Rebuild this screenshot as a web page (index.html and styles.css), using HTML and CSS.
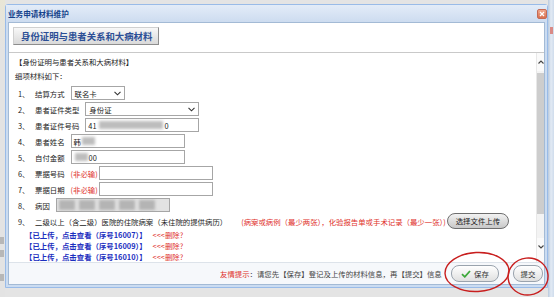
FILE: index.html
```html
<!DOCTYPE html>
<html lang="zh-CN">
<head>
  <meta charset="UTF-8">
  <title>业务申请材料维护</title>
  <link rel="stylesheet" href="styles.css">
</head>
<body>
  <div class="desk">
    <div class="desk-left">
      <span class="ghost"></span>
      <span class="ghost"></span>
      <span class="ghost ghost-low"></span>
    </div>
    <div class="win-col">
      <div class="win">
        <div class="win-title">
          <span>业务申请材料维护</span>
          <span class="win-close">
            <svg width="6" height="6" viewBox="0 0 6 6"><path d="M1 1L5 5M5 1L1 5" stroke="#fff" stroke-width="1.3"/></svg>
          </span>
        </div>
        <div class="win-body">
          <div class="tab-bar">
            <div class="tab-btn">身份证明与患者关系和大病材料</div>
          </div>
          <div class="main">
            <div class="form">
              <div class="sec-title">【身份证明与患者关系和大病材料】</div>
              <div class="sec-sub">细项材料如下：</div>

              <div class="row">
                <span class="num">1、</span><span class="lbl">结算方式</span>
                <div class="field sel w54">联名卡<svg class="chev" width="7" height="5" viewBox="0 0 7 5"><path d="M0.5 0.8L3.5 3.8L6.5 0.8" fill="none" stroke="#333" stroke-width="1.1"/></svg></div>
              </div>
              <div class="row">
                <span class="num">2、</span><span class="lbl">患者证件类型</span>
                <div class="field sel w114">身份证<svg class="chev" width="7" height="5" viewBox="0 0 7 5"><path d="M0.5 0.8L3.5 3.8L6.5 0.8" fill="none" stroke="#333" stroke-width="1.1"/></svg></div>
              </div>
              <div class="row">
                <span class="num">3、</span><span class="lbl">患者证件号码</span>
                <div class="field w114">41<span class="blur b-long"></span>0</div>
              </div>
              <div class="row">
                <span class="num">4、</span><span class="lbl">患者姓名</span>
                <div class="field w114">韩<span class="blur b-short"></span></div>
              </div>
              <div class="row">
                <span class="num">5、</span><span class="lbl">自付金额</span>
                <div class="field w114"><span class="blur b-short"></span>00</div>
              </div>
              <div class="row">
                <span class="num">6、</span><span class="lbl">票据号码</span><span class="note">(非必输)</span>
                <div class="field w114"></div>
              </div>
              <div class="row">
                <span class="num">7、</span><span class="lbl">票据日期</span><span class="note">(非必输)</span>
                <div class="field w114"></div>
              </div>
              <div class="row">
                <span class="num">8、</span><span class="lbl">病因</span>
                <div class="field field-blur w114"><span class="blur b-word"></span><span class="blur b-word"></span><span class="blur b-word"></span><span class="blur b-word"></span><span class="blur b-word"></span></div>
              </div>
              <div class="row">
                <span class="num">9、</span><span class="lbl">二级以上（含二级）医院的住院病案（未住院的提供病历）</span>
                <span class="note note-gap">(病案或病例（最少两张），化验报告单或手术记录（最少一张）)</span>
                <span class="upload-btn">选择文件上传</span>
              </div>

              <div class="link-row"><span class="link">【已上传，点击查看（序号16007）】</span><span class="del">&lt;&lt;&lt;删除?</span></div>
              <div class="link-row"><span class="link">【已上传，点击查看（序号16009）】</span><span class="del">&lt;&lt;&lt;删除?</span></div>
              <div class="link-row"><span class="link">【已上传，点击查看（序号16010）】</span><span class="del">&lt;&lt;&lt;删除?</span></div>
            </div>
            <div class="vscroll">
              <div class="vs-btn">
                <svg width="6" height="4" viewBox="0 0 6 4"><path d="M0.5 3.5L3 1L5.5 3.5" fill="none" stroke="#444" stroke-width="1.1"/></svg>
              </div>
              <div class="vs-thumb"></div>
              <div class="vs-track"></div>
              <div class="vs-btn">
                <svg width="6" height="4" viewBox="0 0 6 4"><path d="M0.5 0.5L3 3L5.5 0.5" fill="none" stroke="#444" stroke-width="1.1"/></svg>
              </div>
              <div class="vs-end"></div>
            </div>
          </div>
          <div class="footer">
            <span class="tip"><span class="tip-key">友情提示</span>：请您先【保存】登记及上传的材料信息，再【提交】信息</span>
            <span class="btn btn-save">
              <svg width="10" height="8" viewBox="0 0 10 8"><path d="M1 4.2L3.8 6.8L9 1" fill="none" stroke="#3da83a" stroke-width="1.8"/></svg>
              保存
            </span>
            <span class="btn btn-submit">提交</span>
          </div>
        </div>
      </div>
    </div>
    <div class="desk-right"><span class="desk-mark"></span></div>
  </div>

  <svg class="marks" width="554" height="297" viewBox="0 0 554 297">
    <ellipse cx="477" cy="272" rx="32" ry="19.5" fill="none" stroke="#c81e1e" stroke-width="1.4" transform="rotate(-3 477 272)"/>
    <ellipse cx="528" cy="276.5" rx="20" ry="18.5" fill="none" stroke="#c81e1e" stroke-width="1.4" transform="rotate(-6 528 276)"/>
  </svg>
</body>
</html>
```

FILE: styles.css
```css
* {
  margin: 0;
  padding: 0;
  box-sizing: border-box;
}

body {
  width: 554px;
  height: 297px;
  overflow: hidden;
  position: relative;
  background: #e4e4e4;
  font-family: "Noto Sans CJK SC", "Noto Sans", sans-serif;
  font-size: 7.4px;
  color: #222;
}

.desk {
  display: flex;
  height: 297px;
}

.desk-left {
  width: 5px;
  flex: none;
  display: flex;
  flex-direction: column;
  padding-top: 237px;
  gap: 6px;
  background: linear-gradient(#e9e6d6 0, #e3e3e3 50px);
}

.ghost {
  width: 4px;
  height: 7px;
  background: #9a9a9a;
  opacity: 0.6;
}

.ghost-low {
  margin-top: 11px;
}

.desk-right {
  flex: 1;
  position: relative;
  background: linear-gradient(to right, #b9c9dd, #e2eaf4 3px, #cfdcec);
}

.desk-mark {
  position: absolute;
  left: 2px;
  top: 27px;
  width: 3px;
  height: 7px;
  background: #d98a86;
}

.win-col {
  width: 543px;
  flex: none;
  padding-top: 4px;
}

.win {
  height: 284px;
  display: flex;
  flex-direction: column;
  background: #cbdcf1;
  border: 1px solid #99bbe8;
  border-radius: 3px 3px 0 0;
}

.win-title {
  height: 17px;
  flex: none;
  display: flex;
  align-items: center;
  justify-content: space-between;
  padding: 0 0 0 2px;
  background: linear-gradient(#e3ecf8, #cddcf0);
  color: #15428b;
  font-weight: bold;
  font-size: 7.6px;
}

.win-close {
  width: 10px;
  height: 10px;
  display: flex;
  align-items: center;
  justify-content: center;
  border: 1px solid #c46a55;
  border-radius: 2px;
  background: linear-gradient(#f0a78c, #d9704f);
}

.win-body {
  flex: 1;
  min-height: 0;
  margin: 0 2px 2px;
  display: flex;
  flex-direction: column;
  background: #fff;
  border: 1px solid #a3bad5;
}

.tab-bar {
  height: 30px;
  flex: none;
  padding: 4px 0 0 4px;
  border-bottom: 1px solid #c9c9c9;
}

.tab-btn {
  display: inline-block;
  height: 18px;
  line-height: 16px;
  padding: 0 6px 0 7px;
  font-size: 9.4px;
  font-weight: bold;
  color: #2c4f96;
  background: linear-gradient(#f8f8f8, #d9d9d9);
  border: 1px solid;
  border-color: #d0d0d0 #8d8d8d #8d8d8d #d0d0d0;
}

.main {
  flex: 1;
  min-height: 0;
  display: flex;
  overflow: hidden;
}

.form {
  flex: 1;
  padding: 2px 0 0 6px;
  overflow: hidden;
  white-space: nowrap;
}

.sec-title,
.sec-sub {
  line-height: 14px;
}

.sec-sub {
  margin-bottom: 2px;
}

.row {
  height: 16px;
  display: flex;
  align-items: center;
  padding-left: 3px;
}

.num {
  width: 17px;
  flex: none;
}

.lbl {
  margin-right: 6px;
}

.note {
  color: #e0302a;
  margin-right: 1px;
}

.note-gap {
  margin-left: 8px;
}

.field {
  height: 14px;
  flex: none;
  display: flex;
  align-items: center;
  padding: 0 2px;
  border: 1px solid #a6a6a6;
  background: #fff;
  overflow: hidden;
}

.sel {
  justify-content: space-between;
  padding: 0 3px;
}

.w54 {
  width: 54px;
}

.w114 {
  width: 114px;
}

.blur {
  display: inline-block;
  height: 8px;
  background: #bdbdbd;
  filter: blur(1.4px);
}

.b-long {
  width: 64px;
  margin: 0 2px;
}

.b-short {
  width: 13px;
  margin: 0 1px;
}

.field-blur {
  background: #e2e2e2;
  gap: 4px;
}

.b-word {
  width: 16px;
  height: 10px;
  background: #b4b4b4;
}

.upload-btn {
  height: 16px;
  line-height: 14px;
  padding: 0 8px;
  border: 1px solid #6e6e6e;
  border-radius: 8px;
  background: linear-gradient(#f2f2f2, #c8c8c8);
  color: #222;
}

.link-row {
  height: 11px;
  line-height: 11px;
  padding-left: 10px;
  display: flex;
}

.link {
  color: #1c2fbf;
  font-weight: bold;
}

.del {
  color: #e0302a;
  margin-left: 6px;
}

.vscroll {
  width: 8px;
  flex: none;
  display: flex;
  flex-direction: column;
  background: #f3f3f3;
  border-left: 1px solid #e8e8e8;
}

.vs-btn {
  height: 18px;
  flex: none;
  display: flex;
  align-items: center;
  justify-content: center;
  background: #fafafa;
}

.vs-thumb {
  height: 141px;
  flex: none;
  margin-top: 2px;
  background: #cdcdcd;
}

.vs-track {
  flex: 1;
}

.vs-end {
  height: 6px;
  flex: none;
  background: #fafafa;
}

.footer {
  height: 22px;
  flex: none;
  display: flex;
  align-items: center;
  justify-content: flex-end;
  padding-right: 1px;
  background: #f6f8fb;
  border-top: 1px solid #dde3ea;
  white-space: nowrap;
}

.tip {
  width: 230px;
  overflow: hidden;
  color: #444;
}

.tip-key {
  color: #e0302a;
}

.btn {
  height: 17px;
  display: flex;
  align-items: center;
  justify-content: center;
  border: 1px solid #9aa3ad;
  border-radius: 8px;
  background: linear-gradient(#ffffff, #e0e0e0);
  color: #333;
}

.btn-save {
  width: 48px;
  gap: 3px;
  margin-left: 1px;
}

.btn-submit {
  width: 30px;
  margin-left: 14px;
}

.marks {
  position: absolute;
  left: 0;
  top: 0;
  pointer-events: none;
}
```
